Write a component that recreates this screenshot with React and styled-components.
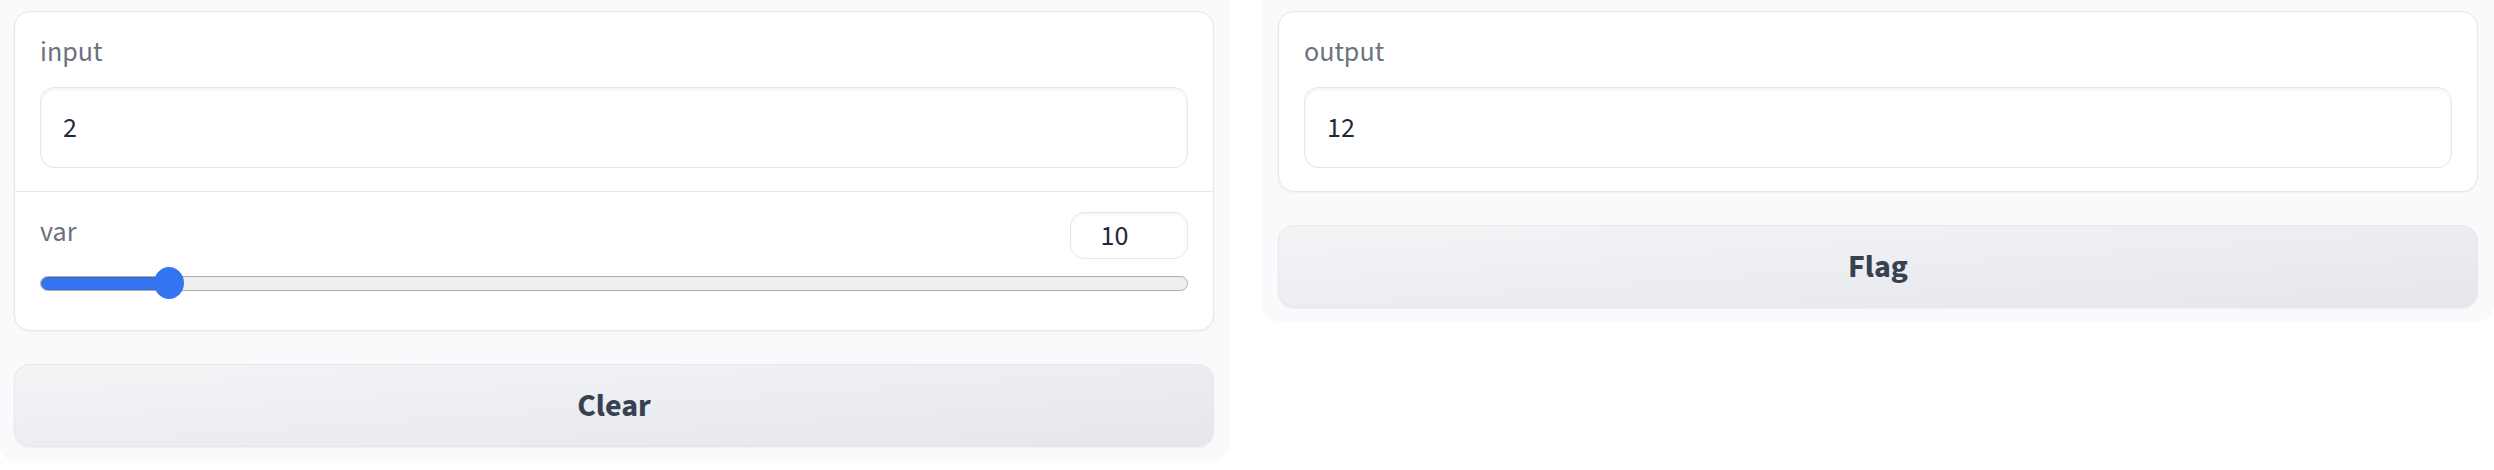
import React from "react";
import styled, { createGlobalStyle } from "styled-components";

const GlobalStyle = createGlobalStyle`
  body {
    margin: 0;
    background: #ffffff;
    font-family: "Source Sans Pro", "Source Sans 3", Lato, "Noto Sans", sans-serif;
  }
`;

const Row = styled.div`
  display: flex;
  align-items: flex-start;
  gap: 32px;
  margin-left: -2px;
  width: calc(100% + 2px);
`;

const Panel = styled.div`
  flex: 1 1 0;
  min-width: 0;
  display: flex;
  flex-direction: column;
  gap: 33px;
  padding: 11px 16px 14px;
  background: #f9fafb;
  border-radius: 0 0 18px 18px;
`;

const Card = styled.div`
  background: #ffffff;
  border: 1px solid #e5e7eb;
  border-radius: 16px;
  box-shadow: 0 1px 2px rgba(0, 0, 0, 0.04);
  overflow: hidden;
`;

const Block = styled.div`
  padding: ${(p) => (p.$divided ? "19px 25px 31px" : "19px 25px 23px")};
  border-top: ${(p) => (p.$divided ? "1px solid #e5e7eb" : "none")};
`;

const Label = styled.div`
  font-size: 28px;
  line-height: 42px;
  color: #6b7280;
  margin-bottom: ${(p) => (p.$inline ? "0" : "14px")};
`;

const TextBox = styled.input`
  display: block;
  box-sizing: border-box;
  width: 100%;
  height: 81px;
  padding: 0 22px;
  border: 1px solid #e5e7eb;
  border-radius: 14px;
  background: #ffffff;
  box-shadow: inset 0 2px 4px rgba(0, 0, 0, 0.05);
  font-family: inherit;
  font-size: 28px;
  color: #1f2937;
  outline: none;
`;

const SliderHead = styled.div`
  display: flex;
  justify-content: space-between;
  align-items: flex-start;
`;

const NumberBox = styled.input`
  box-sizing: border-box;
  width: 118px;
  height: 47px;
  margin-top: 1px;
  padding: 0 29px 0 0;
  border: 1px solid #e5e7eb;
  border-radius: 14px;
  background: #ffffff;
  box-shadow: inset 0 2px 4px rgba(0, 0, 0, 0.04);
  font-family: inherit;
  font-size: 28px;
  color: #1f2937;
  text-align: center;
  outline: none;
`;

const SliderWrap = styled.div`
  position: relative;
  display: flex;
  align-items: center;
  height: 32px;
  margin-top: 8px;
`;

const Track = styled.div`
  flex: 1;
  height: 15px;
  box-sizing: border-box;
  border: 1px solid #adadad;
  border-radius: 8px;
  background: #efefef;
  overflow: hidden;
`;

const Fill = styled.div`
  height: 100%;
  background: #3574f0;
  box-shadow: inset 0 0 0 1px #3f68c8;
  border-radius: 8px 0 0 8px;
`;

const Thumb = styled.div`
  position: absolute;
  top: 0;
  width: 30px;
  height: 32px;
  border-radius: 50%;
  background: #3574f0;
`;

const Button = styled.button`
  display: flex;
  align-items: center;
  justify-content: center;
  height: 83px;
  width: 100%;
  border: 1px solid #e5e7eb;
  border-radius: 16px;
  background: linear-gradient(to bottom right, #f3f4f6, #e5e7eb);
  box-shadow: 0 1px 2px rgba(0, 0, 0, 0.05);
  font-family: inherit;
  font-size: 32px;
  font-weight: 700;
  color: #374151;
  cursor: pointer;
`;

const Slider = ({ value, min, max }) => {
  const frac = (value - min) / (max - min);
  const thumbLeft = `calc((100% - 30px) * ${frac} + 2px)`;
  return (
    <SliderWrap>
      <Track>
        <Fill style={{ width: `calc((100% - 30px) * ${frac} + 16px)` }} />
      </Track>
      <Thumb style={{ left: thumbLeft }} />
    </SliderWrap>
  );
};

export default function App() {
  return (
    <>
      <GlobalStyle />
      <Row>
        <Panel>
          <Card>
            <Block>
              <Label>input</Label>
              <TextBox readOnly value="2" />
            </Block>
            <Block $divided>
              <SliderHead>
                <Label $inline>var</Label>
                <NumberBox readOnly value="10" />
              </SliderHead>
              <Slider value={10} min={0} max={100} />
            </Block>
          </Card>
          <Button>Clear</Button>
        </Panel>
        <Panel>
          <Card>
            <Block>
              <Label>output</Label>
              <TextBox readOnly value="12" />
            </Block>
          </Card>
          <Button>Flag</Button>
        </Panel>
      </Row>
    </>
  );
}
